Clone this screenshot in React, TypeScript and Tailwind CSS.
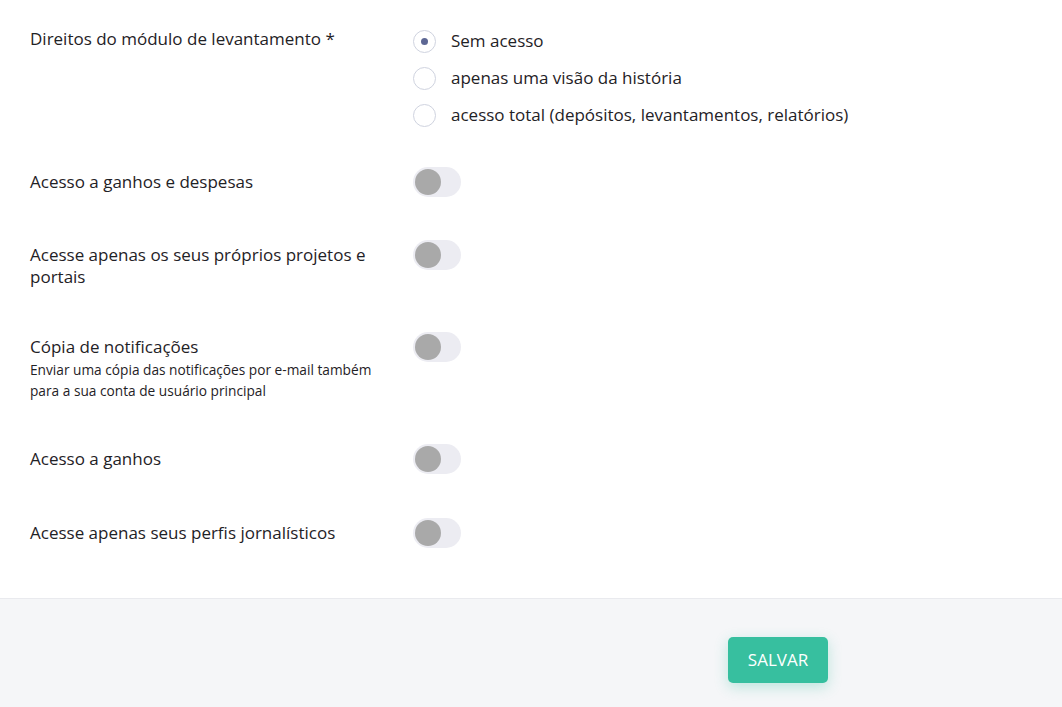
import { useState } from "react";

const radioOptions = [
  "Sem acesso",
  "apenas uma visão da história",
  "acesso total (depósitos, levantamentos, relatórios)",
];

function Toggle() {
  return (
    <div className="flex h-[30px] w-[48px] shrink-0 items-center rounded-full bg-[#ececf2] px-[2px]">
      <div className="h-[26px] w-[26px] rounded-full bg-[#a9a9a9]" />
    </div>
  );
}

function Radio({ checked }: { checked: boolean }) {
  return (
    <div className="flex h-[23px] w-[23px] shrink-0 items-center justify-center rounded-full border border-[#cfd3df] bg-white">
      {checked && <div className="h-[7px] w-[7px] rounded-full bg-[#5d6794]" />}
    </div>
  );
}

function ToggleRow({ label, hint, className = "" }: { label: string; hint?: string; className?: string }) {
  return (
    <div className={`flex items-start ${className}`}>
      <div className="w-[383px] shrink-0 pr-[10px] pt-[4px]">
        <p className="text-[17px] leading-[22px]">{label}</p>
        {hint && (
          <p className="mt-[1px] text-[13.7px] leading-[21px]">{hint}</p>
        )}
      </div>
      <Toggle />
    </div>
  );
}

export default function App() {
  const [selected] = useState(0);

  return (
    <div className="bg-white text-[#1f2226]" style={{ fontFamily: '"Open Sans", sans-serif' }}>
      <div className="flex flex-col px-[30px] pb-[50px] pt-[28px]">
        <div className="flex items-start">
          <div className="w-[383px] shrink-0 pr-[10px]">
            <p className="text-[17px] leading-[22px]">Direitos do módulo de levantamento *</p>
          </div>
          <div className="flex flex-col gap-[11px]">
            {radioOptions.map((opt, i) => (
              <label key={opt} className="flex h-[26px] items-center gap-[15px]">
                <Radio checked={i === selected} />
                <span className="text-[17px]">{opt}</span>
              </label>
            ))}
          </div>
        </div>

        <ToggleRow className="mt-[39px]" label="Acesso a ganhos e despesas" />
        <ToggleRow className="mt-[43px]" label="Acesse apenas os seus próprios projetos e portais" />
        <ToggleRow
          className="mt-[44px]"
          label="Cópia de notificações"
          hint="Enviar uma cópia das notificações por e-mail também para a sua conta de usuário principal"
        />
        <ToggleRow className="mt-[43px]" label="Acesso a ganhos" />
        <ToggleRow className="mt-[44px]" label="Acesse apenas seus perfis jornalísticos" />
      </div>

      <div className="border-t border-[#e9eaee] bg-[#f5f6f8] pb-[39px] pt-[38px]">
        <button className="ml-[728px] h-[46px] w-[100px] rounded-[5px] bg-[#37bf9f] text-[17px] text-white shadow-[0_4px_14px_rgba(55,191,159,0.3)]">
          SALVAR
        </button>
      </div>
    </div>
  );
}
